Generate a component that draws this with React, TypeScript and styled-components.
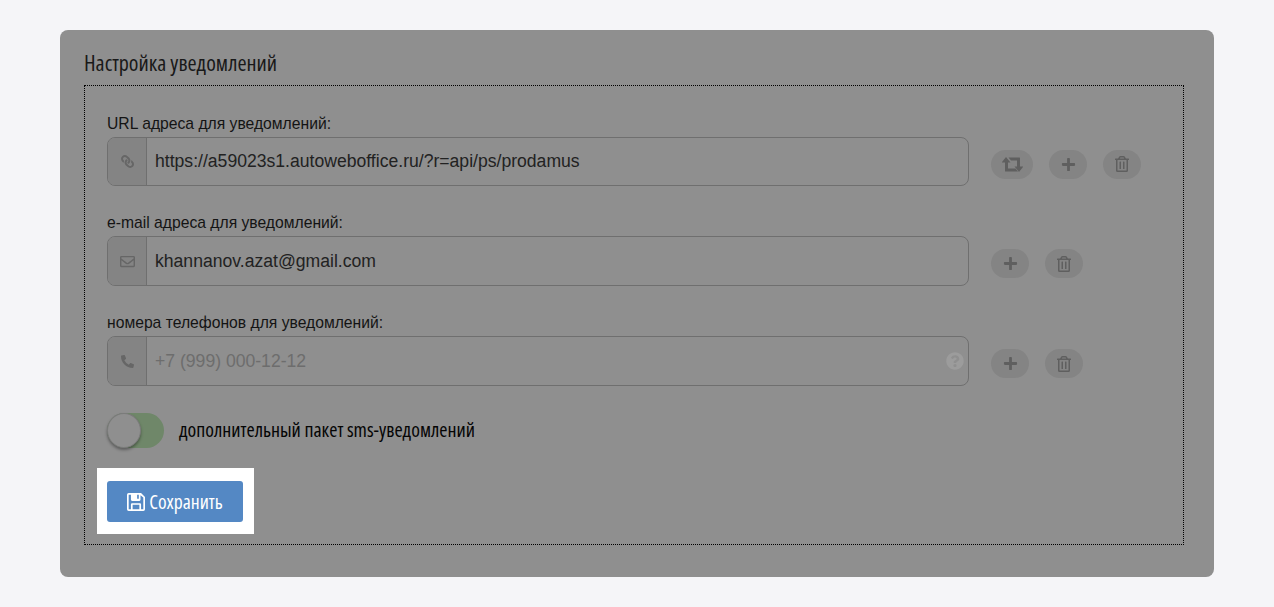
import styled, { createGlobalStyle } from 'styled-components'
import { FaPlus, FaRegTrashAlt, FaLink, FaRegEnvelope, FaPhoneAlt, FaQuestionCircle } from 'react-icons/fa'

const GlobalStyle = createGlobalStyle`
  html, body {
    margin: 0;
    padding: 0;
    background: #f5f5f8;
    font-family: "Liberation Sans", Arial, sans-serif;
  }
`
const Page = styled.div`
  padding: 30px 60px;
  box-sizing: border-box;
  height: 607px;
  overflow: hidden;
`
const Panel = styled.div`
  height: 547px;
  box-sizing: border-box;
  padding: 21px 30px 31px 24px;
  background: #8f8f8f;
  border-radius: 8px;
`
const Title = styled.h2`
  margin: 0 0 11px;
  height: 23px;
  font: 400 22px/23px "Open Sans", sans-serif;
  font-stretch: 75%;
  color: #191919;
`
const Fieldset = styled.div`
  height: 460px;
  box-sizing: border-box;
  border: 1px dotted #000;
  padding: 29px 22px 0;
`
const Group = styled.div<{ $first?: boolean }>`
  height: ${p => (p.$first ? '99px' : '100px')};
`
const Label = styled.div`
  font-size: 15.7px;
  line-height: 18px;
  height: 22px;
  color: #141414;
`
const Row = styled.div`
  display: flex;
  align-items: center;
`
const InputBox = styled.div<{ $first?: boolean }>`
  width: 862px;
  height: ${p => (p.$first ? '49px' : '50px')};
  box-sizing: border-box;
  display: flex;
  align-items: center;
  border: 1px solid #6f6f6f;
  border-radius: 8px;
  overflow: hidden;
`
const Addon = styled.div`
  width: 38px;
  height: 100%;
  flex: none;
  display: flex;
  align-items: center;
  justify-content: center;
  background: #848484;
  border-right: 1px solid #6f6f6f;
  color: #666;
  font-size: 15px;
`
const LinkIcon = styled(FaLink)`
  font-size: 13px;
  transform: scaleX(-1);
`
const PhoneIcon = styled(FaPhoneAlt)`
  font-size: 13px;
`
const Value = styled.div<{ $placeholder?: boolean }>`
  flex: 1;
  padding-left: 8px;
  font-size: 17.6px;
  color: ${p => (p.$placeholder ? '#6d6d6d' : '#222')};
`
const Hint = styled.div`
  display: flex;
  margin-right: 4px;
  color: #9c9c9c;
  font-size: 18px;
`
const Actions = styled.div`
  display: flex;
  gap: 16px;
  margin-left: 22px;
  margin-top: 5px;
`
const ActionButton = styled.div<{ $wide?: boolean }>`
  width: ${p => (p.$wide ? '42.4px' : '38px')};
  height: 29px;
  display: flex;
  align-items: center;
  justify-content: center;
  border-radius: 15px;
  background: #848484;
  color: #5f5f5f;
  font-size: 15px;
`
const TrashIcon = styled(FaRegTrashAlt)`
  font-size: 16px;
`
const ToggleRow = styled.div`
  display: flex;
  align-items: center;
  gap: 15px;
  margin-top: -1px;
`
const Toggle = styled.div`
  position: relative;
  width: 57px;
  height: 35px;
  border-radius: 18px;
  background: #6f8769;
`
const Knob = styled.div`
  position: absolute;
  left: 0;
  top: 0;
  width: 34px;
  height: 35px;
  box-sizing: border-box;
  border-radius: 50%;
  background: #8f8f8f;
  border: 1px solid #7b7b7b;
  box-shadow: 0 2px 3px rgba(0, 0, 0, 0.35);
`
const ToggleText = styled.span`
  padding-bottom: 2px;
  font: 400 19.8px/22px "Open Sans", sans-serif;
  font-stretch: 75%;
  color: #050505;
`
const Highlight = styled.div`
  width: 157px;
  height: 66px;
  box-sizing: border-box;
  margin: 20px 0 0 -10px;
  padding: 13px 11px 12px 10px;
  background: #fff;
`
const SaveButton = styled.button`
  width: 136px;
  height: 41px;
  display: flex;
  align-items: center;
  justify-content: center;
  gap: 4px;
  padding: 0;
  border: none;
  border-radius: 3px;
  background: #5488c4;
  color: #fff;
  font: 500 19.6px/20px "Open Sans", sans-serif;
  font-stretch: 75%;
`

const RetweetIcon = () => (
  <svg width="21" height="15" viewBox="0 0 21 15" fill="currentColor">
    <path d="M4 0 8.5 5.5H6V11.5H13.5L16 14.5H3.5A.5.5 0 0 1 3 14V5.5H-.5Z" />
    <path d="M17 15 12.5 9.5H15V3.5H9L6.5 .5H17.5A.5.5 0 0 1 18 1V9.5H21.5Z" />
  </svg>
)

const SaveIcon = () => (
  <svg width="18" height="18" viewBox="0 0 16 16" fill="currentColor" fillRule="evenodd">
    <path d="M1.5 0H12.5L16 3.5V14.5A1.5 1.5 0 0 1 14.5 16H1.5A1.5 1.5 0 0 1 0 14.5V1.5A1.5 1.5 0 0 1 1.5 0ZM1.5 1.5V14.5H3.5V10A1 1 0 0 1 4.5 9H11.5A1 1 0 0 1 12.5 10V14.5H14.5V4L12 2V6A1 1 0 0 1 11 7H4.5A1 1 0 0 1 3.5 6V1.5ZM5 10.5V14.5H11V10.5ZM9 1.5V5H10.5V1.5Z" />
  </svg>
)

export default function App() {
  return (
    <Page>
      <GlobalStyle />
      <Panel>
        <Title>Настройка уведомлений</Title>
        <Fieldset>
          <Group $first>
            <Label>URL адреса для уведомлений:</Label>
            <Row>
              <InputBox $first>
                <Addon><LinkIcon /></Addon>
                <Value>https://a59023s1.autoweboffice.ru/?r=api/ps/prodamus</Value>
              </InputBox>
              <Actions>
                <ActionButton $wide><RetweetIcon /></ActionButton>
                <ActionButton><FaPlus /></ActionButton>
                <ActionButton><TrashIcon /></ActionButton>
              </Actions>
            </Row>
          </Group>
          <Group>
            <Label>e-mail адреса для уведомлений:</Label>
            <Row>
              <InputBox>
                <Addon><FaRegEnvelope /></Addon>
                <Value>khannanov.azat@gmail.com</Value>
              </InputBox>
              <Actions>
                <ActionButton><FaPlus /></ActionButton>
                <ActionButton><TrashIcon /></ActionButton>
              </Actions>
            </Row>
          </Group>
          <Group>
            <Label>номера телефонов для уведомлений:</Label>
            <Row>
              <InputBox>
                <Addon><PhoneIcon /></Addon>
                <Value $placeholder>+7 (999) 000-12-12</Value>
                <Hint><FaQuestionCircle /></Hint>
              </InputBox>
              <Actions>
                <ActionButton><FaPlus /></ActionButton>
                <ActionButton><TrashIcon /></ActionButton>
              </Actions>
            </Row>
          </Group>
          <ToggleRow>
            <Toggle><Knob /></Toggle>
            <ToggleText>дополнительный пакет sms-уведомлений</ToggleText>
          </ToggleRow>
          <Highlight>
            <SaveButton><SaveIcon />Сохранить</SaveButton>
          </Highlight>
        </Fieldset>
      </Panel>
    </Page>
  )
}
